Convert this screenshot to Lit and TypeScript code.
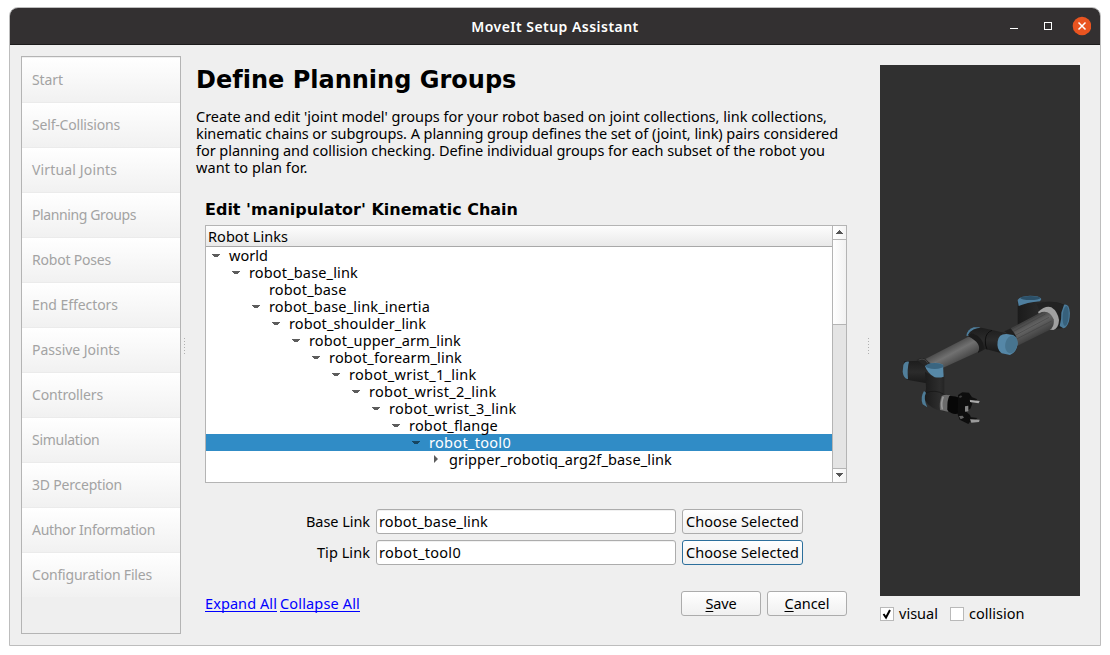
import { LitElement, html, css, svg } from "lit";
import { customElement, property } from "lit/decorators.js";

/** A single line of text whose tracking is adjusted so that it spans `span` pixels. */
@customElement("fit-text")
class FitText extends LitElement {
  @property({ type: Number }) span = 0;
  static styles = css`
    :host { display: inline-block; white-space: pre; text-decoration: inherit; }
    .run { display: inline-block; }
  `;
  firstUpdated() {
    const run = this.renderRoot.querySelector(".run") as HTMLElement;
    const count = (this.textContent || "").length;
    const natural = run.getBoundingClientRect().width;
    run.style.letterSpacing = `${(this.span - natural) / count}px`;
  }
  render() { return html`<span class="run"><slot></slot></span>`; }
}

const NAV: [string, number][] = [
  ["Start", 31], ["Self-Collisions", 88], ["Virtual Joints", 85], ["Planning Groups", 104],
  ["Robot Poses", 79], ["End Effectors", 86], ["Passive Joints", 88], ["Controllers", 71],
  ["Simulation", 67.5], ["3D Perception", 90], ["Author Information", 123], ["Configuration Files", 120],
];

const INTRO: [string, number][] = [
  ["Create and edit 'joint model' groups for your robot based on joint collections, link collections,", 631],
  ["kinematic chains or subgroups. A planning group defines the set of (joint, link) pairs considered", 642],
  ["for planning and collision checking. Define individual groups for each subset of the robot you", 629],
  ["want to plan for.", 111.5],
];

type Row = { name: string; depth: number; span: number; state: "open" | "closed" | "leaf"; selected?: boolean };
const TREE: Row[] = [
  { name: "world", depth: 0, span: 39, state: "open" },
  { name: "robot_base_link", depth: 1, span: 109, state: "open" },
  { name: "robot_base", depth: 2, span: 77.5, state: "leaf" },
  { name: "robot_base_link_inertia", depth: 2, span: 161, state: "open" },
  { name: "robot_shoulder_link", depth: 3, span: 137, state: "open" },
  { name: "robot_upper_arm_link", depth: 4, span: 152, state: "open" },
  { name: "robot_forearm_link", depth: 5, span: 133, state: "open" },
  { name: "robot_wrist_1_link", depth: 6, span: 127.5, state: "open" },
  { name: "robot_wrist_2_link", depth: 7, span: 127.5, state: "open" },
  { name: "robot_wrist_3_link", depth: 8, span: 127.5, state: "open" },
  { name: "robot_flange", depth: 9, span: 89, state: "open" },
  { name: "robot_tool0", depth: 10, span: 82, state: "open", selected: true },
  { name: "gripper_robotiq_arg2f_base_link", depth: 11, span: 223, state: "closed" },
];

const robot = svg`
  <defs>
    <linearGradient id="tube1" gradientUnits="userSpaceOnUse" x1="400" y1="120" x2="430" y2="176">
      <stop offset="0" stop-color="#3c3c3c"/><stop offset=".45" stop-color="#646464"/><stop offset="1" stop-color="#3e3e3e"/>
    </linearGradient>
    <linearGradient id="tube2" gradientUnits="userSpaceOnUse" x1="175" y1="196" x2="203" y2="248">
      <stop offset="0" stop-color="#484848"/><stop offset=".45" stop-color="#717171"/><stop offset="1" stop-color="#474747"/>
    </linearGradient>
    <linearGradient id="shell" x1="0" y1="0" x2="1" y2="0">
      <stop offset="0" stop-color="#1b1b1b"/><stop offset=".6" stop-color="#2d2d2d"/><stop offset="1" stop-color="#1a1a1a"/>
    </linearGradient>
    <linearGradient id="shell2" x1="0" y1="0" x2="0" y2="1">
      <stop offset="0" stop-color="#1d1d1d"/><stop offset=".5" stop-color="#2b2b2b"/><stop offset="1" stop-color="#191919"/>
    </linearGradient>
  </defs>
  <path d="M383 66 L454 64 Q500 64 522 74 L520 144 L485 148 L440 110 L383 136Z" fill="url(#shell)"/>
  <path d="M440 72 Q466 62 500 67 L520 74 L516 98 Q480 74 448 90Z" fill="#232323"/>
  <path d="M383 60 Q390 48 420 47 Q450 47 454 57 L450 64 Q410 68 386 78Z" fill="#4f7f9f"/>
  <ellipse cx="421" cy="54" rx="30" ry="6" fill="#2c5068"/>
  <path d="M522 74 Q530 72 535 79 Q543 94 537 124 Q531 144 520 145 L509 138 Q515 118 514 98Z" fill="#4b7b9a"/>
  <ellipse cx="527" cy="108" rx="9" ry="30" transform="rotate(4 527 108)" fill="#37617c"/>
  <path d="M444 96 Q466 76 484 82 Q503 94 507 120 Q506 144 490 150 L470 148Z" fill="#a0a0a0"/>
  <path d="M345 154 L455 96 Q480 90 491 118 Q494 140 480 149 L377 200Z" fill="url(#tube1)"/>
  <path d="M352 154 L458 98 M360 160 L466 102 M368 170 L477 112 M374 180 L485 123" stroke="#3d3d3d" stroke-width="1.500" fill="none"/>
  <path d="M343 154 L362 145 Q374 160 380 172 L360 168Z" fill="#202020"/>
  <path d="M229 167 Q233 147 251 142 L270 142 L244 168Z" fill="#4e7e9c"/>
  <path d="M234 164 Q246 143 275 143 L310 151 L356 161 L330 218 L286 207 L265 218 L244 178Z" fill="url(#shell2)"/>
  <path d="M306 151 Q288 157 286 180 Q285 196 291 208" stroke="#0f0f0f" stroke-width="3" fill="none"/>
  <path d="M100 240 L235 170 Q256 160 270 190 Q274 209 263 216 L158 264Z" fill="url(#tube2)"/>
  <path d="M244 160 Q280 169 281 204 L264 218 Q278 190 234 169Z" fill="#1b1b1b"/>
  <path d="M323 184 Q326 161 350 162 L369 165 Q383 175 383 192 Q379 218 360 225 L335 220 Q319 209 323 184Z" fill="#5587a7"/>
  <ellipse cx="364" cy="193" rx="18" ry="27" transform="rotate(12 364 193)" fill="#47748f"/>
  <path d="M42 244 L96 242 Q110 252 120 285 L110 310 L50 299Z" fill="url(#shell2)"/>
  <path d="M80 240 Q94 230 107 237 L121 251 L105 259Z" fill="#262626"/>
  <path d="M86 240 Q96 234 106 240 L114 250" fill="none" stroke="#555" stroke-width="2"/>
  <path d="M40 255 Q45 243 57 245 Q51 265 54 298 Q40 294 38 275Z" fill="#517f9b"/>
  <path d="M105 275 Q130 292 163 284 L163 342 L180 346 L163 395 Q126 391 103 360 L108 325Z" fill="url(#shell)"/>
  <path d="M108 338 Q136 328 160 342" stroke="#141414" stroke-width="2" fill="none"/>
  <path d="M105 258 Q133 240 159 254 L161 290 Q151 294 134 292 Q112 280 105 258Z" fill="#5789a8"/>
  <ellipse cx="134" cy="258" rx="27" ry="9" fill="#3a6580"/>
  <path d="M102 333 Q90 352 98 373 L112 382 Q99 355 108 338Z" fill="#4d7b96"/>
  <path d="M155 348 Q166 342 180 346 L174 395 L150 390Q147 368 155 348Z" fill="#6b6b6b"/>
  <path d="M160 350 Q152 368 157 388" stroke="#989898" stroke-width="5" fill="none"/>
  <path d="M178 348 Q195 347 210 354 L207 400 Q188 407 172 390 Q171 360 178 348Z" fill="#070707"/>
  <path d="M204 345 L217 337 L237 338 L245 350 L238 361 L247 371 L241 386 L227 394 L240 405 L245 419 L235 432 L209 419 L203 403Z" fill="#0d0d0d"/>
  <path d="M243 350 L262 358 L256 363 L236 358Z M232 410 L262 414 L256 420 L240 418Z" fill="#101010"/>
  <path d="M240 360 L269 363 L266 370 L240 366Z" fill="#aaa"/>
  <path d="M240 418 L269 419 L267 426 L244 428Z" fill="#9b9b9b"/>
  <path d="M225 379 L235 377 L235 394 L225 395Z" fill="#858585"/>
  <path d="M207 408 L218 407 L222 413 L212 418Z" fill="#646464"/>
  <path d="M206 350l7-4 4 4-7 4z" fill="#3d3d3d"/>
`;

@customElement("app-root")
class AppRoot extends LitElement {
  static styles = css`
    :host { display: block; box-sizing: border-box; width: 1110px; height: 655px; padding: 7px 9px 9px; background: #fff;
      font: 14.5px/17px "Noto Sans", "Open Sans", sans-serif; color: #000; overflow: hidden; }
    * { box-sizing: border-box; }
    .window { width: 1092px; height: 639px; border: 1px solid #bdbdbd; border-radius: 9px 9px 0 0; background: #efefef;
      display: flex; flex-direction: column; overflow: hidden; }
    .titlebar { height: 37px; flex: none; background: #333031; border-bottom: 1px solid #1c1b1b; display: grid;
      grid-template-columns: 1fr auto 1fr; align-items: center; color: #fff; font-weight: 600; font-size: 14px; }
    .title { grid-column: 2; }
    .controls { justify-self: end; display: flex; margin-right: 9px; }
    .body { flex: 1; display: flex; padding: 11px 0 0 11px; align-items: flex-start; }
    .nav { width: 160px; height: 578px; border: 1px solid #b4b4b4; padding-top: 1px; color: #a3a3a3; font-size: 14px; }
    .nav-item { height: 45px; padding: 0 0 1px 10px; display: flex; align-items: center;
      background: linear-gradient(#fff, #f1f1f1); border-bottom: 1px solid #ebebeb; }
    .nav-item:last-child { border-bottom-color: #efefef; }
    .grip { width: 1px; height: 16px; background: repeating-linear-gradient(#b0b0b0 0 1px, transparent 1px 3px); }
    .grip.left { margin: 282px 0 0 3px; }
    .grip.right { margin: 282px 0 0 21px; }
    .main { width: 651px; margin-left: 11px; padding-top: 10px; }
    h1 { font: bold 24px/28px "DejaVu Sans", sans-serif; margin: 0; height: 28px; }
    .intro { margin-top: 14px; }
    .intro .line { height: 17px; }
    .edit { padding-left: 9px; }
    h2 { font: bold 16px/20px "DejaVu Sans", sans-serif; margin: 24px 0 5px; height: 20px; }
    .tree { height: 258px; border: 1px solid #b4b4b4; background: #fff; display: flex; width: 642px; }
    .cols { flex: 1; }
    .head { height: 21px; border-bottom: 1px solid #a8a8a8; background: linear-gradient(#fdfdfd, #e9e9e9); padding: 2px 0 0 2px; }
    .row { height: 17px; display: flex; align-items: center; }
    .row.selected { background: #308cc6; color: #fff; }
    .twist { width: 20px; height: 17px; flex: none; display: block; margin-right: 3px; }
    .twist path { fill: #5c5c5c; }
    .selected .twist path { fill: #174661; }
    .bar { width: 15px; border-left: 1px solid #b4b4b4; display: flex; flex-direction: column; background: #e4e4e4; margin-right: -1px; border-right: 1px solid #b4b4b4; }
    .bar svg { display: block; background: linear-gradient(90deg, #fff, #f4f4f4); }
    .thumb { height: 86px; border: solid #b4b4b4; border-width: 1px 0; background: linear-gradient(90deg, #fff, #f2f2f2); }
    .track { flex: 1; border-bottom: 1px solid #b4b4b4; }
    .form { display: grid; grid-template-columns: 165px 300px 121px; gap: 6px; margin-top: 26px; }
    .label { display: flex; justify-content: flex-end; align-items: center; }
    .field, .button { height: 25px; border: 1px solid #acacac; border-radius: 3px; display: flex; align-items: center; }
    .field { background: #fff; padding-left: 2px; box-shadow: inset 0 1px #f1f1f1; }
    .button { justify-content: center; background: linear-gradient(#fff, #f0f0f0); }
    .button.focus { border-color: #2c6f9c; }
    .foot { display: flex; margin-top: 26px; align-items: center; }
    .link { color: #00f; border-bottom: 1px solid #00f; height: 17px; margin-right: 3px; }
    .links { flex: 1; display: flex; }
    .foot .button { width: 80px; margin-left: 6px; }
    .key { text-decoration: underline; text-underline-offset: 2px; text-decoration-thickness: 1px; }
    .side { width: 200px; margin: 9px 0 0 11px; }
    .scene { width: 200px; height: 531px; background: #303030; padding: 215px 0 0 10px; }
    .scene svg { display: block; }
    .checks { display: flex; margin-top: 9px; align-items: center; height: 17px; }
    .box { width: 14px; height: 14px; border: 1px solid #b9b9b9; background: #fff; margin-right: 5px; display: block; }
    .checks .second { margin-left: 12px; }
  `;

  renderRow(r: Row) {
    return html`<div class="row ${r.selected ? "selected" : ""}" style="padding-left:${r.depth * 20}px">
      <svg class="twist" viewBox="0 0 20 17">
        ${r.state === "open" ? svg`<path d="M6 7h8v1h-1v1h-1v1h-4v-1h-1v-1h-1z"/>` : ""}
        ${r.state === "closed" ? svg`<path d="M8 4.500h1v1h1v1h1v1h1v1h-1v1h-1v1h-1v1h-1z"/>` : ""}
      </svg><fit-text span=${r.span}>${r.name}</fit-text></div>`;
  }

  render() {
    return html`<div class="window">
      <div class="titlebar">
        <div class="title"><fit-text span="167.5">MoveIt Setup Assistant</fit-text></div>
        <svg class="controls" width="92" height="36" viewBox="0 0 92 36" shape-rendering="crispEdges">
          <path d="M11 20.500h8M45.500 14.500h7v7h-7z" fill="none" stroke="#fff"/>
          <g shape-rendering="auto"><circle cx="83" cy="18" r="9.300" fill="#e95420"/>
          <path d="M79.500 14.500l7 7m0-7l-7 7" stroke="#fff" stroke-width="1.500"/></g>
        </svg>
      </div>
      <div class="body">
        <div class="nav">${NAV.map(([t, w]) => html`<div class="nav-item"><fit-text span=${w}>${t}</fit-text></div>`)}</div>
        <div class="grip left"></div>
        <div class="main">
          <h1><fit-text span="319.5">Define Planning Groups</fit-text></h1>
          <div class="intro">${INTRO.map(([t, w]) => html`<div class="line"><fit-text span=${w}>${t}</fit-text></div>`)}</div>
          <div class="edit">
            <h2><fit-text span="313">Edit 'manipulator' Kinematic Chain</fit-text></h2>
            <div class="tree">
              <div class="cols">
                <div class="head"><fit-text span="80">Robot Links</fit-text></div>
                ${TREE.map((r) => this.renderRow(r))}
              </div>
              <div class="bar">
                <svg width="13" height="13"><path d="M6 4h1v1h1v1h1v1h1v1h-7v-1h1v-1h1v-1h1z" fill="#555"/></svg>
                <div class="thumb"></div><div class="track"></div>
                <svg width="13" height="13"><path d="M3 4h7v1h-1v1h-1v1h-1v1h-1v-1h-1v-1h-1v-1h-1z" fill="#555"/></svg>
              </div>
            </div>
            <div class="form">
              <div class="label"><fit-text span="64">Base Link</fit-text></div>
              <div class="field"><fit-text span="109">robot_base_link</fit-text></div>
              <div class="button"><fit-text span="113">Choose Selected</fit-text></div>
              <div class="label"><fit-text span="53">Tip Link</fit-text></div>
              <div class="field"><fit-text span="82">robot_tool0</fit-text></div>
              <div class="button focus"><fit-text span="113">Choose Selected</fit-text></div>
            </div>
            <div class="foot">
              <div class="links">
                <div class="link"><fit-text span="72">Expand All</fit-text></div>
                <div class="link"><fit-text span="80">Collapse All</fit-text></div>
              </div>
              <div class="button"><fit-text span="31"><span class="key">S</span>ave</fit-text></div>
              <div class="button"><fit-text span="45"><span class="key">C</span>ancel</fit-text></div>
            </div>
          </div>
        </div>
        <div class="grip right"></div>
        <div class="side">
          <div class="scene"><svg width="190" height="150" viewBox="0 0 570 450">${robot}</svg></div>
          <div class="checks">
            <svg class="box" viewBox="0 0 12 12"><path d="M2.500 6l2.500 3.500 4-7.500" fill="none" stroke="#000" stroke-width="2"/></svg>
            <fit-text span="39">visual</fit-text>
            <span class="box second"></span><fit-text span="55.5">collision</fit-text>
          </div>
        </div>
      </div>
    </div>`;
  }
}
